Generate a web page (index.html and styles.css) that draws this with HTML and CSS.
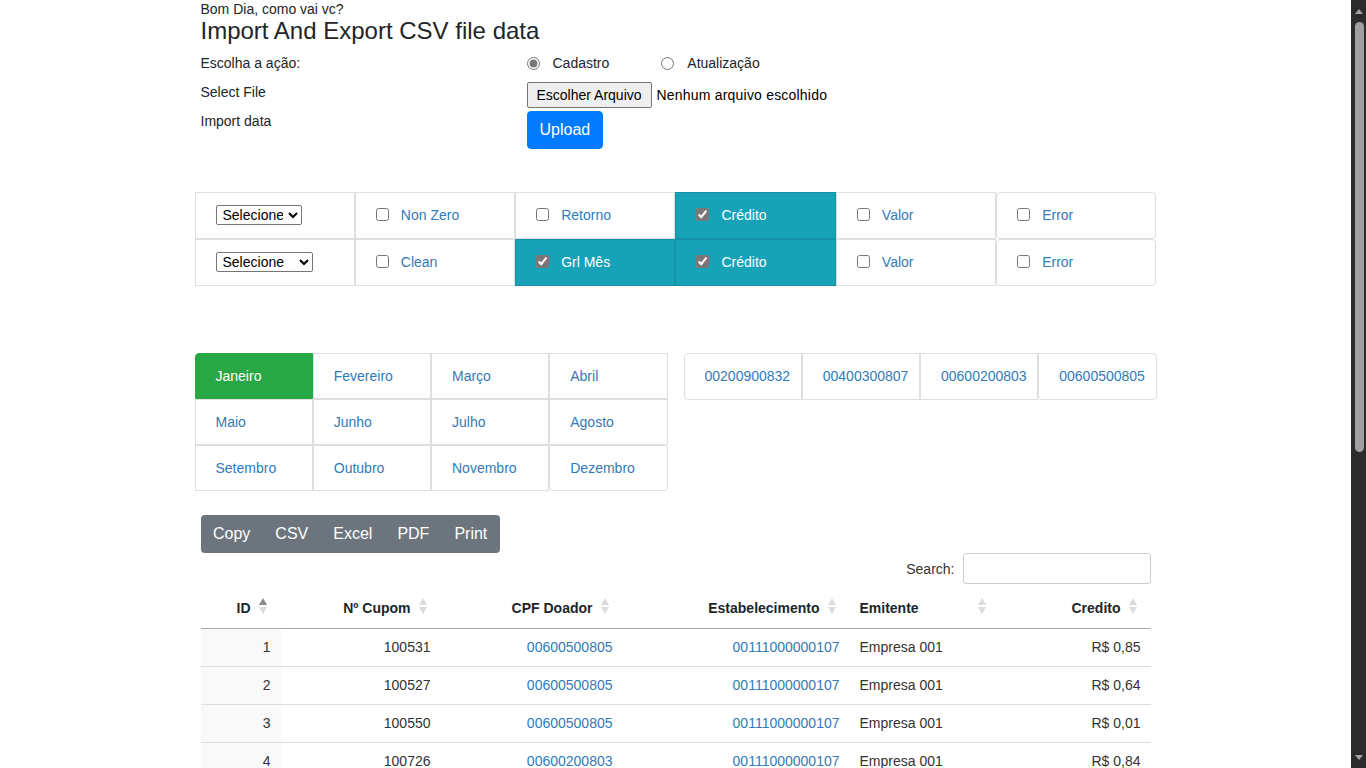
FILE: index.html
```html
<!DOCTYPE html>
<html lang="pt-BR">
<head>
<meta charset="utf-8">
<title>Import And Export CSV file data</title>
<link rel="stylesheet" href="styles.css">
</head>
<body>
<main class="page">
<div class="container">
  <header class="intro">
    <div class="greeting">Bom Dia, como vai vc?</div>
    <h2 class="title">Import And Export CSV file data</h2>
    <form class="import-form">
      <div class="labels">
        <div class="lbl">Escolha a ação:</div>
        <div class="lbl">Select File</div>
        <div class="lbl">Import data</div>
      </div>
      <div class="controls">
        <div class="radios">
          <label class="radio"><input type="radio" name="acao" checked><span>Cadastro</span></label>
          <label class="radio"><input type="radio" name="acao"><span>Atualização</span></label>
        </div>
        <div class="file">
          <span class="file-btn">Escolher Arquivo</span>
          <span class="file-name">Nenhum arquivo escolhido</span>
        </div>
        <button class="btn-upload" type="button">Upload</button>
      </div>
    </form>
  </header>

  <section class="filter">
    <div class="fcell"><select class="sel sel-a"><option>Selecione</option><option>Todos</option></select></div>
    <label class="fcell"><input type="checkbox"><span>Non Zero</span></label>
    <label class="fcell"><input type="checkbox"><span>Retorno</span></label>
    <label class="fcell active"><input type="checkbox" checked><span>Crédito</span></label>
    <label class="fcell"><input type="checkbox"><span>Valor</span></label>
    <label class="fcell last"><input type="checkbox"><span>Error</span></label>

    <div class="fcell"><select class="sel sel-b"><option>Selecione</option><option>Todos</option></select></div>
    <label class="fcell"><input type="checkbox"><span>Clean</span></label>
    <label class="fcell active"><input type="checkbox" checked><span>Grl Mês</span></label>
    <label class="fcell active"><input type="checkbox" checked><span>Crédito</span></label>
    <label class="fcell"><input type="checkbox"><span>Valor</span></label>
    <label class="fcell last"><input type="checkbox"><span>Error</span></label>
  </section>

  <section class="lists">
    <div class="months">
      <a class="item first active">Janeiro</a>
      <a class="item">Fevereiro</a>
      <a class="item">Março</a>
      <a class="item">Abril</a>
      <a class="item">Maio</a>
      <a class="item">Junho</a>
      <a class="item">Julho</a>
      <a class="item">Agosto</a>
      <a class="item">Setembro</a>
      <a class="item">Outubro</a>
      <a class="item">Novembro</a>
      <a class="item end">Dezembro</a>
    </div>
    <div class="codes">
      <a class="item first">00200900832</a>
      <a class="item">00400300807</a>
      <a class="item">00600200803</a>
      <a class="item end">00600500805</a>
    </div>
  </section>

  <section class="data">
    <div class="dt-buttons">
      <button type="button">Copy</button>
      <button type="button">CSV</button>
      <button type="button">Excel</button>
      <button type="button">PDF</button>
      <button type="button">Print</button>
    </div>
    <div class="dt-search">
      <label for="q">Search:</label>
      <input id="q" type="search">
    </div>
    <table class="grid">
      <colgroup>
        <col class="c-id"><col class="c-cup"><col class="c-cpf"><col class="c-est"><col class="c-emi"><col class="c-cre">
      </colgroup>
      <thead>
        <tr>
          <th class="sort asc">ID</th>
          <th class="sort">Nº Cupom</th>
          <th class="sort">CPF Doador</th>
          <th class="sort">Estabelecimento</th>
          <th class="sort left">Emitente</th>
          <th class="sort">Credito</th>
        </tr>
      </thead>
      <tbody>
        <tr><td class="id">1</td><td>100531</td><td><a>00600500805</a></td><td><a>00111000000107</a></td><td class="left">Empresa 001</td><td>R$ 0,85</td></tr>
        <tr><td class="id">2</td><td>100527</td><td><a>00600500805</a></td><td><a>00111000000107</a></td><td class="left">Empresa 001</td><td>R$ 0,64</td></tr>
        <tr><td class="id">3</td><td>100550</td><td><a>00600500805</a></td><td><a>00111000000107</a></td><td class="left">Empresa 001</td><td>R$ 0,01</td></tr>
        <tr><td class="id">4</td><td>100726</td><td><a>00600200803</a></td><td><a>00111000000107</a></td><td class="left">Empresa 001</td><td>R$ 0,84</td></tr>
        <tr><td class="id">5</td><td>100612</td><td><a>00400300807</a></td><td><a>00111000000107</a></td><td class="left">Empresa 001</td><td>R$ 0,37</td></tr>
        <tr><td class="id">6</td><td>100598</td><td><a>00200900832</a></td><td><a>00111000000107</a></td><td class="left">Empresa 001</td><td>R$ 0,52</td></tr>
        <tr><td class="id">7</td><td>100644</td><td><a>00600200803</a></td><td><a>00111000000107</a></td><td class="left">Empresa 001</td><td>R$ 0,19</td></tr>
        <tr><td class="id">8</td><td>100701</td><td><a>00600500805</a></td><td><a>00111000000107</a></td><td class="left">Empresa 001</td><td>R$ 0,73</td></tr>
        <tr><td class="id">9</td><td>100533</td><td><a>00400300807</a></td><td><a>00111000000107</a></td><td class="left">Empresa 001</td><td>R$ 0,28</td></tr>
        <tr><td class="id">10</td><td>100689</td><td><a>00200900832</a></td><td><a>00111000000107</a></td><td class="left">Empresa 001</td><td>R$ 0,91</td></tr>
      </tbody>
    </table>
    <div class="dt-footer">
      <div class="dt-info">Showing 1 to 10 of 33 entries</div>
      <div class="dt-paging">
        <span class="pg disabled">Previous</span>
        <span class="pg current">1</span>
        <span class="pg">2</span>
        <span class="pg">3</span>
        <span class="pg">4</span>
        <span class="pg">Next</span>
      </div>
    </div>
  </section>
</div>
</main>
<aside class="scrollbar" aria-hidden="true">
  <svg class="sb-arrow up" width="8" height="5" viewBox="0 0 8 5"><polygon points="4,0 8,5 0,5" fill="#a3a3a3"/></svg>
  <div class="sb-thumb"></div>
  <div class="sb-space"></div>
  <svg class="sb-arrow down" width="8" height="5" viewBox="0 0 8 5"><polygon points="0,0 8,0 4,5" fill="#a3a3a3"/></svg>
</aside>
</body>
</html>
```

FILE: styles.css
```css
* { box-sizing: border-box; }

body {
  margin: 0;
  display: flex;
  align-items: flex-start;
  font-family: "Liberation Sans", Arial, Helvetica, sans-serif;
  font-size: 14px;
  line-height: 20px;
  color: #212529;
  background: #fff;
}

a { color: #337ab7; text-decoration: none; cursor: pointer; }

.page { flex: 1; min-width: 0; }

/* ---------- scrollbar look-alike ---------- */
.scrollbar {
  position: sticky;
  top: 0;
  flex: 0 0 15px;
  width: 15px;
  height: 100vh;
  background: #2b2b2b;
  display: flex;
  flex-direction: column;
  align-items: center;
}
.sb-arrow { display: block; flex: none; }
.sb-arrow.up { margin-top: 9px; margin-left: 1px; }
.sb-arrow.down { margin-bottom: 8px; margin-left: 1px; }
.sb-thumb {
  flex: none;
  width: 9px;
  height: 430px;
  margin-top: 8px;
  margin-left: 1px;
  border-radius: 5px;
  background: #a0a0a0;
}
.sb-space { flex: 1; }

.container {
  width: 962px;
  margin: 0 auto;
  padding-bottom: 40px;
}

/* ---------- header / import form ---------- */
.intro { padding: 0 6px; }
.greeting { line-height: 18px; }
.title {
  margin: 0;
  font-size: 24px;
  font-weight: 400;
  line-height: 26px;
  color: #212529;
}
.import-form { display: flex; margin-top: 9px; }
.labels { width: 326px; }
.lbl { line-height: 20px; margin-bottom: 9px; }

.controls { display: flex; flex-direction: column; align-items: flex-start; }
.radios { display: flex; gap: 52px; height: 20px; align-items: center; }
.radio { display: inline-flex; align-items: center; gap: 13px; }
.radio input { margin: 0; width: 13px; height: 13px; accent-color: #777; }

.file { display: flex; align-items: center; margin-top: 9px; }
.file-btn {
  display: inline-block;
  height: 26px;
  line-height: 18px;
  padding: 3px 9px;
  background: #efefef;
  border: 1px solid #767676;
  border-radius: 2px;
  color: #000;
}
.file-name { margin-left: 5px; color: #000; letter-spacing: 0.2px; }

.btn-upload {
  margin-top: 3px;
  height: 38px;
  padding: 6px 12px;
  font-family: inherit;
  font-size: 16px;
  line-height: 24px;
  color: #fff;
  background: #007bff;
  border: 1px solid #007bff;
  border-radius: 4px;
}

/* ---------- filter grid ---------- */
.filter {
  display: grid;
  grid-template-columns: repeat(6, minmax(0, 1fr));
  margin-top: 43px;
}
.fcell {
  height: 47px;
  display: flex;
  align-items: center;
  gap: 12px;
  padding: 0 20px 2px;
  border: 1px solid #dfdfdf;
  color: #337ab7;
  background: #fff;
}
.fcell input { margin: 0; width: 13px; height: 13px; accent-color: #777; }
.fcell.active {
  background: #17a2b8;
  border-color: #1592a6;
  color: #fff;
}
.fcell.last { border-radius: 4px; }

.sel {
  font-family: inherit;
  font-size: 14px;
  height: 20px;
  color: #000;
  background: #fff;
  border: 1px solid #767676;
  border-radius: 2px;
  padding: 0 2px;
}
.sel-a { width: 86px; }
.sel-b { width: 97px; }

/* ---------- months / codes ---------- */
.lists {
  display: grid;
  grid-template-columns: 473px 473px;
  gap: 16px;
  margin-top: 67px;
  align-items: start;
}
.months, .codes { display: grid; grid-template-columns: repeat(4, minmax(0, 1fr)); }
.item {
  display: block;
  height: 46px;
  padding: 12px 0 12px 20px;
  line-height: 20px;
  white-space: nowrap;
  border: 1px solid #dfdfdf;
  color: #337ab7;
  background: #fff;
}
.codes .item { height: 47px; }
.item.first { border-top-left-radius: 4px; }
.codes .item.first { border-bottom-left-radius: 4px; }
.item.end { border-radius: 0 4px 4px 4px; }
.item.active { background: #28a745; border-color: #28a745; color: #fff; }

/* ---------- datatable ---------- */
.data { padding: 0 6px; margin-top: 24px; }
.dt-buttons {
  display: inline-flex;
  background: #6c757d;
  border-radius: 4px;
}
.dt-buttons button {
  height: 38px;
  padding: 6px 11.5px;
  font-family: inherit;
  font-size: 16px;
  line-height: 24px;
  color: #fff;
  background: transparent;
  border: 1px solid transparent;
}
.dt-search {
  display: flex;
  justify-content: flex-end;
  align-items: center;
  gap: 8px;
  color: #333;
}
.dt-search input {
  width: 188px;
  height: 31px;
  border: 1px solid #c9ccd0;
  border-radius: 3px;
  padding: 2px 6px;
  font-family: inherit;
  font-size: 14px;
}

.grid {
  width: 950px;
  margin-top: 6px;
  border-collapse: collapse;
  table-layout: fixed;
  color: #333;
}
.c-id { width: 80px; }
.c-cup { width: 160px; }
.c-cpf { width: 182px; }
.c-est { width: 227px; }
.c-emi { width: 150px; }
.c-cre { width: 151px; }

.grid th {
  position: relative;
  height: 38px;
  padding: 9px 30px 9px 10px;
  text-align: right;
  font-weight: 700;
  line-height: 19px;
  color: #212529;
  border-bottom: 1px solid #aaa;
}
.grid th.left { text-align: left; }
.sort::before, .sort::after {
  content: "";
  position: absolute;
  right: 14px;
  border-left: 4.5px solid transparent;
  border-right: 4.5px solid transparent;
}
.sort::before { top: 8px; border-bottom: 7px solid #dcdcdc; }
.sort::after { top: 17px; border-top: 7px solid #dcdcdc; }
.sort.asc::before { border-bottom-color: #888; }

.grid td {
  height: 38px;
  padding: 8px 10px 9px;
  text-align: right;
  line-height: 20px;
  border-bottom: 1px solid #ddd;
  white-space: nowrap;
}
.grid td.left { text-align: left; }
.grid td.id { background: #f9f9f9; }

.dt-footer {
  display: flex;
  justify-content: space-between;
  align-items: center;
  padding-top: 10px;
  color: #333;
}
.dt-paging { display: flex; gap: 2px; }
.pg { padding: 6px 12px; border: 1px solid transparent; border-radius: 2px; }
.pg.disabled { color: #888; }
.pg.current { border-color: #979797; background: linear-gradient(#fff, #dcdcdc); }
```
